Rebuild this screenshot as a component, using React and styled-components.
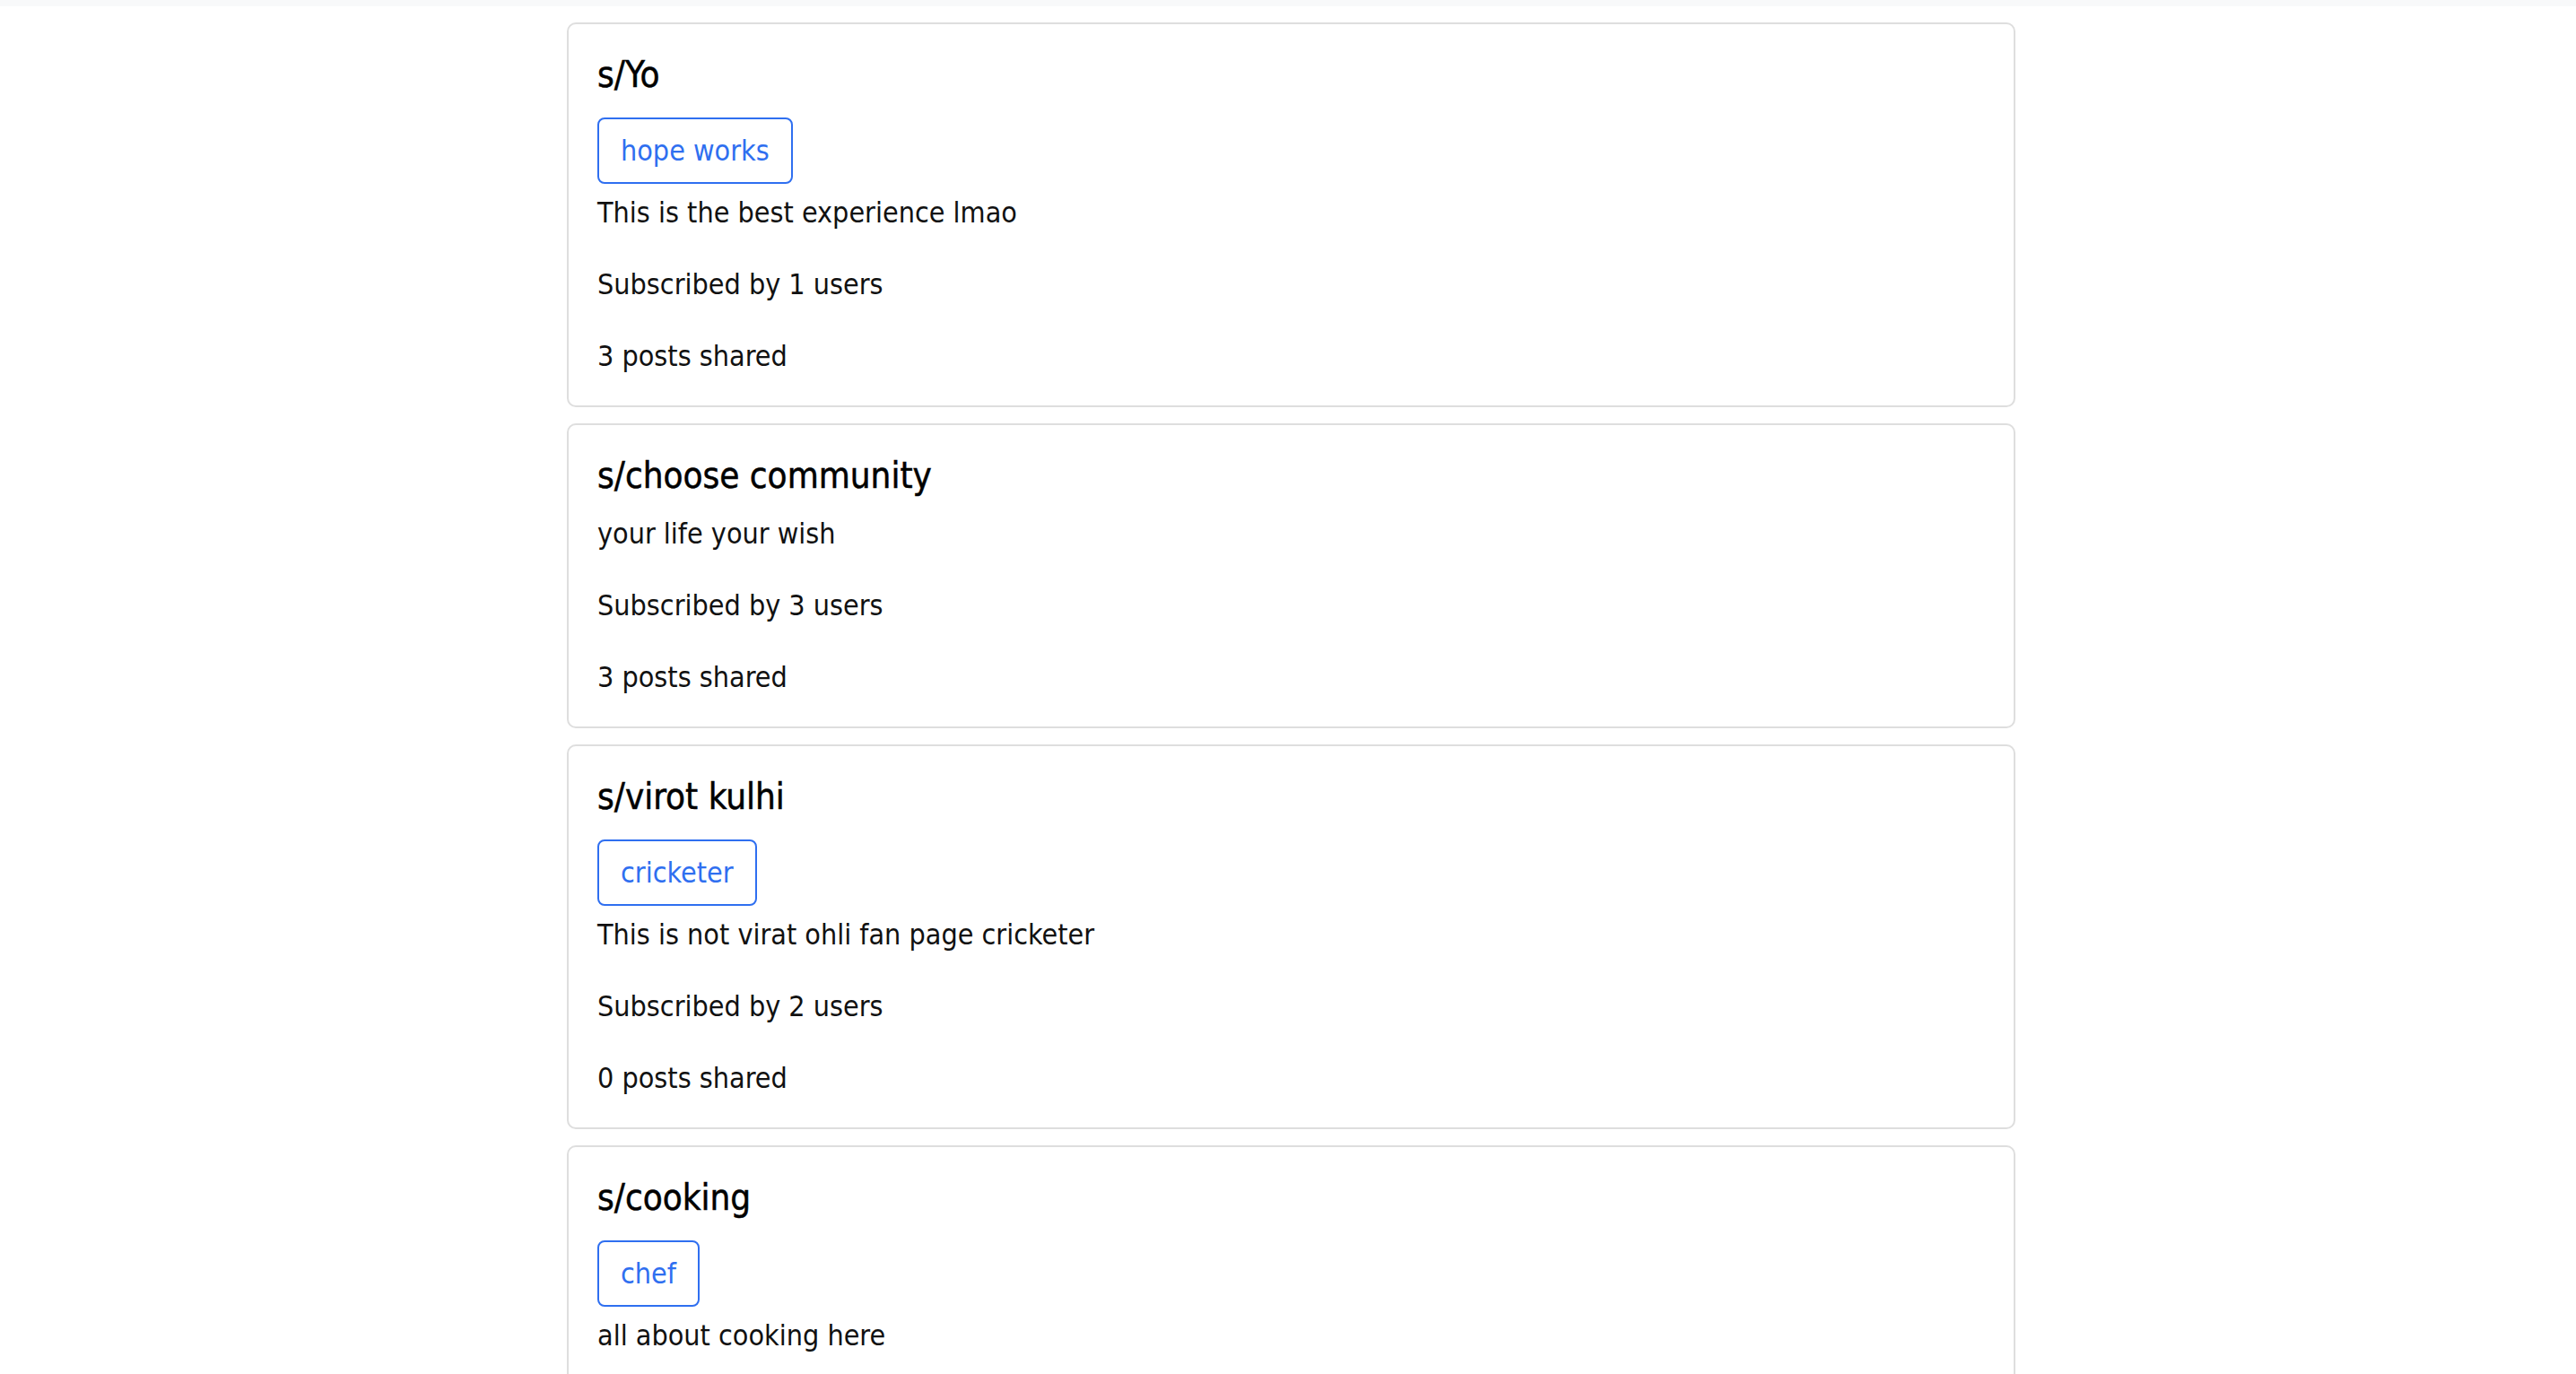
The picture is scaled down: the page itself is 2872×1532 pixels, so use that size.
import React from "react";
import styled, { createGlobalStyle } from "styled-components";

const GlobalStyle = createGlobalStyle`
  *, *::before, *::after {
    box-sizing: border-box;
  }
  html, body {
    margin: 0;
    padding: 0;
    background: #ffffff;
  }
  body {
    font-family: "DejaVu Sans Condensed", "Liberation Sans Narrow", Roboto, sans-serif;
    color: #111111;
  }
`;

const TopBar = styled.div`
  height: 7px;
  background: #f8f9fa;
`;

const List = styled.main`
  width: 1615px;
  margin: 18px 0 0 calc(50% - 804px);
  display: flex;
  flex-direction: column;
  gap: 18px;
  padding-bottom: 40px;
`;

const Card = styled.section`
  border: 2px solid #dedede;
  border-radius: 10px;
  padding: 34px 32px 31px;
  display: flex;
  flex-direction: column;
  align-items: flex-start;
`;

const Title = styled.h5`
  margin: 0 0 19px;
  font-size: 40px;
  line-height: 44px;
  font-weight: 400;
  color: #000;
  -webkit-text-stroke: 0.5px #000;
`;

const Tag = styled.button`
  margin: 7px 0 8px;
  padding: 11px 24px;
  border: 2px solid #2f6ff0;
  border-radius: 8px;
  background: #fff;
  color: #2f6ff0;
  font-family: inherit;
  font-size: 32px;
  line-height: 48px;
  cursor: pointer;
`;

const Stats = styled.div`
  display: flex;
  flex-direction: column;
  gap: 32px;
`;

const Line = styled.p`
  margin: 0;
  font-size: 32px;
  line-height: 48px;
  color: #111;
`;

const communities = [
  { name: "Yo", tag: "hope works", desc: "This is the best experience lmao", subs: 1, posts: 3 },
  { name: "choose community", tag: null, desc: "your life your wish", subs: 3, posts: 3 },
  { name: "virot kulhi", tag: "cricketer", desc: "This is not virat ohli fan page cricketer", subs: 2, posts: 0 },
  { name: "cooking", tag: "chef", desc: "all about cooking here", subs: 1, posts: 1 },
];

export default function App() {
  return (
    <>
      <GlobalStyle />
      <TopBar />
      <List>
        {communities.map((c) => (
          <Card key={c.name}>
            <Title>s/{c.name}</Title>
            {c.tag && <Tag type="button">{c.tag}</Tag>}
            <Stats>
              <Line>{c.desc}</Line>
              <Line>Subscribed by {c.subs} users</Line>
              <Line>{c.posts} posts shared</Line>
            </Stats>
          </Card>
        ))}
      </List>
    </>
  );
}
